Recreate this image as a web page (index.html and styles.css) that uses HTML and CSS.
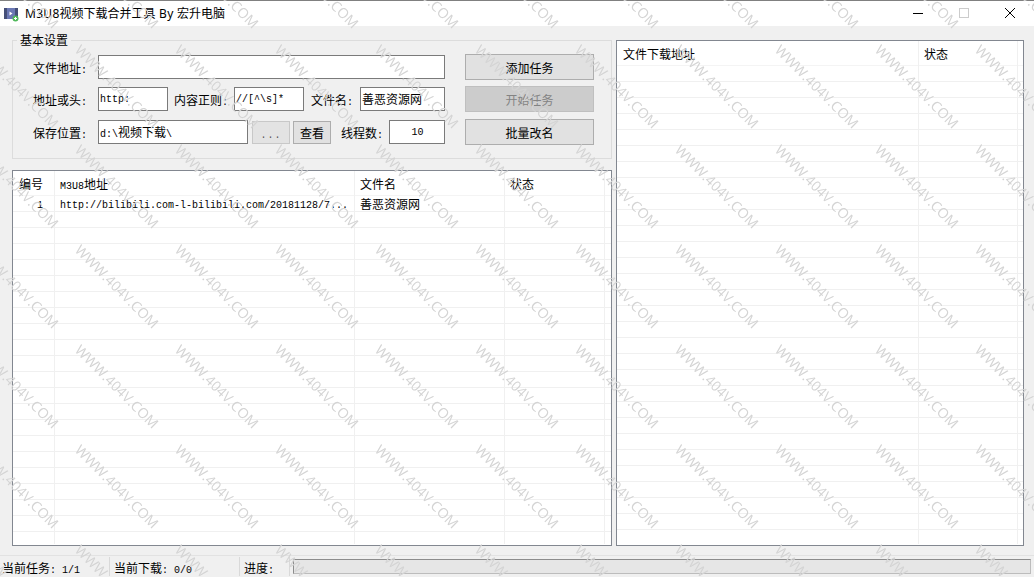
FILE: index.html
```html
<!DOCTYPE html>
<html lang="en">
  <head>
    <meta charset="UTF-8" />
    <title>M3U8视频下载合并工具</title>
    <link rel="stylesheet" href="styles.css">
  </head>
  <body>
    <div class="window">
      <div class="titlebar">
        <svg class="app-icon" width="16" height="16" viewBox="0 0 16 16">
          <rect x="0" y="1" width="14" height="11" fill="#6b78b4" />
          <rect x="0" y="1" width="3" height="11" fill="#454f78" />
          <rect x="11" y="1" width="3" height="11" fill="#454f78" />
          <path d="M5.5 4.5 L8.5 6.5 L5.5 8.5 Z" fill="#fff" />
          <circle cx="11.5" cy="11.5" r="3" fill="#4fb85a" />
          <path d="M10 11.5 H13 M11.5 10 V13" stroke="#fff" stroke-width="1" />
        </svg>
        <span class="title-text"><span class="title-lat">M3U8</span>视频下载合并工具<span class="title-lat"> By </span>宏升电脑</span>
        <div class="win-btns">
          <svg width="46" height="26" viewBox="0 0 46 26"><path d="M18 13.5 H28" stroke="#000" /></svg>
          <svg width="46" height="26" viewBox="0 0 46 26"><rect x="18.5" y="8.5" width="9" height="9" fill="none" stroke="#ccc" /></svg>
          <svg width="46" height="26" viewBox="0 0 46 26"><path d="M18 8 L28 18 M28 8 L18 18" stroke="#000" fill="none" /></svg>
        </div>
      </div>

      <div class="main">
        <div class="left">
          <div class="group">
            <span class="legend">基本设置</span>
            <div class="form">
              <div class="row row1">
                <span class="label w65">文件地址<span class="lat">:</span></span>
                <div class="field grow"></div>
              </div>
              <div class="row row2">
                <span class="label w65">地址或头<span class="lat">:</span></span>
                <div class="field w70 lat">http:</div>
                <span class="label w60 ml6">内容正则<span class="lat">:</span></span>
                <div class="field w70 lat">//[^\s]*</div>
                <span class="label w49 ml7">文件名<span class="lat">:</span></span>
                <div class="field grow">善恶资源网</div>
              </div>
              <div class="row row3">
                <span class="label w65">保存位置<span class="lat">:</span></span>
                <div class="field w150"><span class="lat">d:\</span>视频下载<span class="lat">\</span></div>
                <button class="btn small browse"><span class="lat">...</span></button>
                <button class="btn small view">查看</button>
                <span class="label w48 ml10">线程数<span class="lat">:</span></span>
                <div class="field grow center lat">10</div>
              </div>
            </div>
            <div class="actions">
              <button class="btn big">添加任务</button>
              <button class="btn big disabled">开始任务</button>
              <button class="btn big last">批量改名</button>
            </div>
          </div>

          <div class="list list-tasks">
            <div class="col col-no">
              <div class="col-head">编号</div>
              <div class="cell right lat">1</div>
            </div>
            <div class="col col-url">
              <div class="col-head"><span class="lat">M3U8</span>地址</div>
              <div class="cell lat">http://bilibili.com-l-bilibili.com/20181128/7...</div>
            </div>
            <div class="col col-name">
              <div class="col-head">文件名</div>
              <div class="cell">善恶资源网</div>
            </div>
            <div class="col col-state">
              <div class="col-head">状态</div>
            </div>
            <div class="col col-fill">
              <div class="col-head"></div>
            </div>
          </div>
        </div>

        <div class="list list-files">
          <div class="col col-file">
            <div class="col-head">文件下载地址</div>
          </div>
          <div class="col col-state2">
            <div class="col-head">状态</div>
          </div>
          <div class="col col-fill">
            <div class="col-head"></div>
          </div>
        </div>
      </div>

      <div class="statusbar">
        <div class="stat stat-task">当前任务<span class="lat">: 1/1</span></div>
        <div class="stat stat-down">当前下载<span class="lat">: 0/0</span></div>
        <div class="stat stat-prog">进度<span class="lat">:</span></div>
        <div class="progress"></div>
      </div>

      <svg class="watermark" width="1034" height="577">
        <defs>
          <pattern id="wm" x="70" y="40" width="100" height="100" patternUnits="userSpaceOnUse">
            <text class="wm-text" transform="translate(4 11) rotate(45)">WWW.404V.COM</text>
          </pattern>
        </defs>
        <rect width="1034" height="577" fill="url(#wm)" />
      </svg>
    </div>
  </body>
</html>
```

FILE: styles.css
```css
* {
  box-sizing: border-box;
}
body {
  margin: 0;
  padding: 0;
  font-family: "Noto Sans CJK SC", "Noto Sans", sans-serif;
  font-size: 12px;
  color: #000;
  background: #f0f0f0;
}
.lat {
  font-family: "Liberation Mono", monospace;
  font-size: 10px;
}
.window {
  position: relative;
  width: 1034px;
  height: 577px;
  overflow: hidden;
  display: flex;
  flex-direction: column;
  background: #f0f0f0;
}
.watermark {
  position: absolute;
  left: 0;
  top: 0;
  pointer-events: none;
}
.wm-text {
  font-family: "Open Sans", sans-serif;
  font-size: 14px;
  fill: #d4d4d4;
}

/* title bar */
.titlebar {
  height: 26px;
  flex: none;
  display: flex;
  align-items: center;
  padding-left: 4px;
  background: #fff;
  border-top: 1px solid #808080;
}
.app-icon {
  flex: none;
  margin-top: 2px;
}
.title-text {
  margin-left: 5px;
  font-size: 12px;
  line-height: 16px;
  white-space: pre;
}
.title-lat {
  font-family: "Noto Sans", sans-serif;
  letter-spacing: 0.3px;
}
.win-btns {
  margin-left: auto;
  display: flex;
  margin-right: 1px;
  margin-top: -1px;
}

/* main area */
.main {
  flex: 1;
  min-height: 0;
  display: flex;
  gap: 4px;
  padding: 14px 10px 9px 12px;
}
.left {
  width: 600px;
  flex: none;
  display: flex;
  flex-direction: column;
}

/* group box */
.group {
  position: relative;
  height: 119px;
  flex: none;
  display: flex;
  padding: 13px 0 0 20px;
  border: 1px solid #dcdcdc;
}
.legend {
  position: absolute;
  left: 4px;
  top: -8px;
  padding: 0 3px;
  line-height: 14px;
  background: #f0f0f0;
}
.form {
  width: 412px;
  padding-top: 1px;
  flex: none;
}
.row {
  display: flex;
  align-items: center;
  height: 24px;
}
.row2 {
  margin-top: 8px;
}
.row3 {
  margin-top: 9px;
}
.label {
  flex: none;
  white-space: nowrap;
}
.w65 { width: 65px; }
.w60 { width: 60px; }
.w49 { width: 49px; }
.w48 { width: 48px; }
.ml6 { margin-left: 6px; }
.ml7 { margin-left: 7px; }
.ml10 { margin-left: 10px; }
.field {
  height: 24px;
  line-height: 21px;
  padding-left: 1px;
  background: #fff;
  border: 1px solid #7a7a7a;
  white-space: nowrap;
  overflow: hidden;
}
.field.lat {
  line-height: 23px;
}
.w70 { width: 70px; }
.w150 { width: 150px; }
.grow { flex: 1; }
.center {
  text-align: center;
}
.btn {
  padding: 0;
  font: inherit;
  color: #000;
  background: #e1e1e1;
  border: 1px solid #adadad;
}
.small {
  width: 38px;
  height: 23px;
}
.browse {
  margin-left: 4px;
  color: #555;
  background: #e3e3e3;
  border-color: #c8c8c8;
  letter-spacing: 1px;
}
.view {
  margin-left: 3px;
}
.actions {
  width: 129px;
  margin-left: 20px;
  flex: none;
}
.big {
  display: block;
  width: 129px;
  height: 26px;
  margin-bottom: 6px;
}
.big.last {
  margin-top: 7px;
}
.disabled {
  color: #838383;
  background: #cccccc;
  border-color: #bfbfbf;
}

/* list views */
.list {
  display: flex;
  background: #fff linear-gradient(to bottom, transparent 15px, #f0f0f0 15px) 0 25px / 100% 16px;
  border: 1px solid #828790;
  overflow: hidden;
}
.list-tasks {
  flex: 1;
  margin-top: 11px;
}
.list-files {
  width: 408px;
  flex: none;
}
.col {
  flex: none;
  border-right: 1px solid #f0f0f0;
  margin-bottom: 1px;
}
.col-head {
  height: 25px;
  padding: 0 5px;
  line-height: 25px;
  background: #fff;
  border-bottom: 1px solid #f4f4f4;
  white-space: nowrap;
}
.cell {
  height: 16px;
  padding: 0 5px;
  line-height: 16px;
  white-space: nowrap;
}
.cell.lat {
  line-height: 19px;
}
.right {
  text-align: right;
  padding-right: 11px;
}
.col-no .col-head,
.col-file .col-head {
  padding-left: 6px;
}
.col-no { width: 42px; }
.col-url { width: 300px; }
.col-name { width: 150px; }
.col-state { width: 100px; }
.col-file { width: 302px; }
.col-state2 { width: 99px; }
.col-fill {
  flex: 1;
  border-right: none;
}

/* status bar */
.statusbar {
  height: 22px;
  flex: none;
  display: flex;
  align-items: center;
  border-top: 1px solid #e2e2e2;
}
.stat {
  height: 19px;
  line-height: 21px;
  padding-left: 2px;
  border-right: 1px solid #d9d9d9;
  white-space: pre;
}
.stat-task { width: 110px; }
.stat-down { width: 130px; padding-left: 4px; }
.stat-prog { width: 50px; padding-left: 4px; }
.progress {
  width: 738px;
  height: 15px;
  margin-left: 3px;
  background: #e6e6e6;
  border: 1px solid #bcbcbc;
  border-top-color: #8c8c8c;
  border-left-color: #8c8c8c;
}
```
